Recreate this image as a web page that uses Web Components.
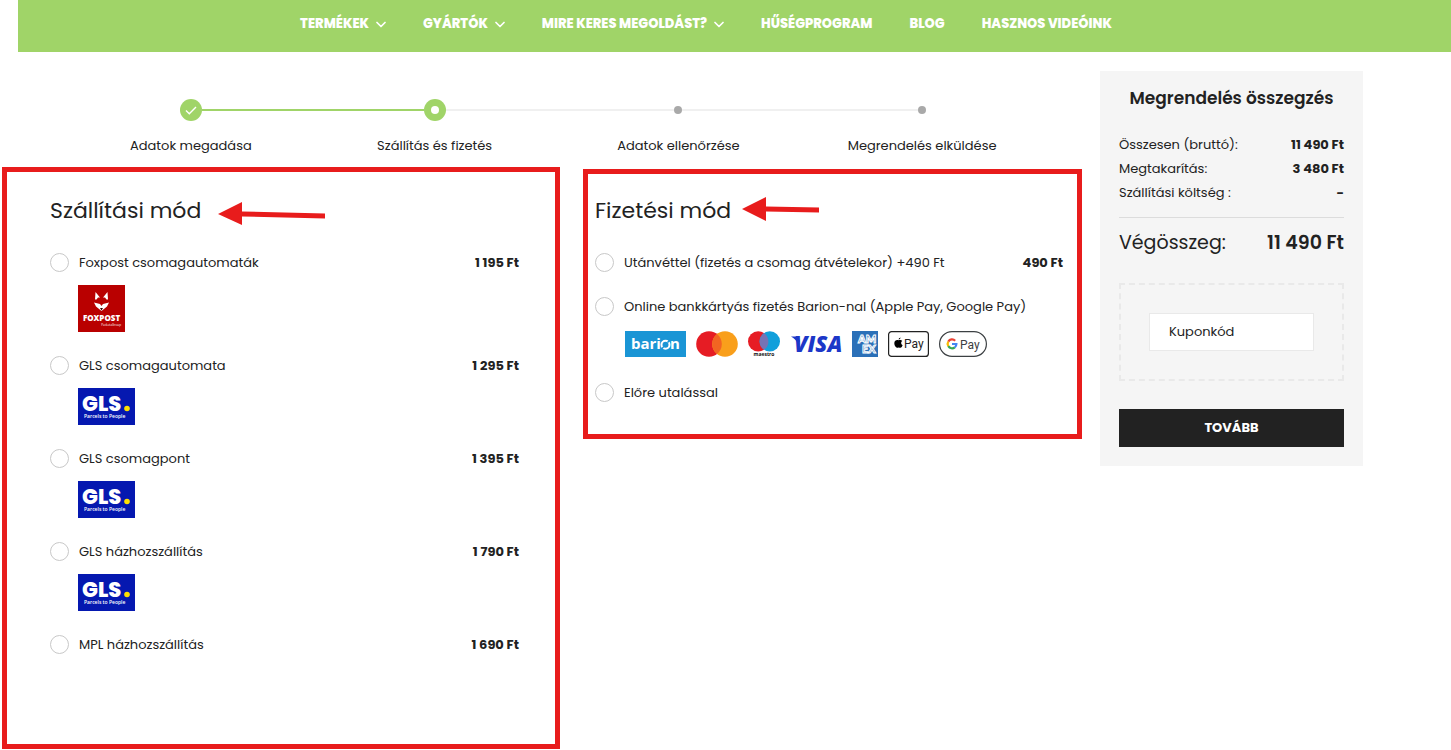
<!DOCTYPE html>
<html lang="hu">
<head>
<meta charset="utf-8">
<meta name="viewport" content="width=device-width, initial-scale=1">
<title>Szállítás és fizetés</title>
<style>
    body {
        margin: 0;
        background: #fff;
        color: #222;
        font: 13px/20px Poppins, Inter, "Open Sans", sans-serif;
        --green: #a0d468;
        --red: #e81c1c;
    }
</style>
</head>
<body>
<checkout-page></checkout-page>

<template id="site-nav">
<style>
    :host { display: block; margin-left: 18px; background: var(--green); }
    nav {
        display: flex;
        justify-content: center;
        gap: 37px;
        padding: 14px 57px 18px 0;
    }
</style>
<nav><slot></slot></nav>
</template>

<template id="nav-item">
<style>
    :host { display: block; }
    a {
        display: flex;
        align-items: center;
        gap: 7px;
        color: #fff;
        font-weight: 800;
        text-decoration: none;
        white-space: nowrap;
    }
    svg { display: none; }
    :host([menu]) svg { display: block; }
</style>
<a href="#"><slot></slot>
    <svg width="10" height="7" viewBox="0 0 10 7" fill="none" stroke="#fff" stroke-width="1.700" stroke-linecap="round" stroke-linejoin="round"><path d="M1 1.500 5 5.500 9 1.500"/></svg>
</a>
</template>

<template id="checkout-step">
<style>
    :host { display: block; flex: 1; text-align: center; }
    .marker { display: grid; grid-template-columns: 1fr auto 1fr; align-items: center; height: 22px; margin-bottom: 15px; }
    .line { height: 2px; background: #f0f0f0; }
    :host([first]) .before, :host([last]) .after { background: none; }
    :host([state="done"]) .after, :host([state="active"]) .before { background: var(--green); }
    .dot { width: 8px; height: 8px; border-radius: 50%; background: #a9a9a9; }
    :host([state]) .dot { display: grid; place-items: center; width: 22px; height: 22px; background: var(--green); }
    :host([state="active"]) .dot::after { content: ""; width: 8px; height: 8px; border-radius: 50%; background: #fff; }
    svg { display: none; }
    :host([state="done"]) svg { display: block; }
</style>
<div class="marker">
    <span class="line before"></span>
    <span class="dot"><svg width="12" height="9" viewBox="0 0 12 9" fill="none" stroke="#fff" stroke-width="1.4"><path d="M1 4.5 4.3 7.7 11 1"/></svg></span>
    <span class="line after"></span>
</div>
<slot></slot>
</template>

<template id="method-panel">
<style>
    :host { display: block; border: 5px solid var(--red); }
    header { display: flex; align-items: center; gap: var(--arrow-gap); height: 28px; margin-bottom: 27px; }
    h2 { margin: 0; font-size: 22px; line-height: 28px; font-weight: 400; white-space: nowrap; }
    .options { display: flex; flex-direction: column; gap: var(--row-gap); }
</style>
<header><h2></h2><slot name="arrow"></slot></header>
<div class="options" role="radiogroup"><slot></slot></div>
</template>

<template id="method-option">
<style>
    :host { display: block; }
    .row { display: flex; align-items: flex-start; gap: 10px; line-height: 22px; }
    input {
        appearance: none;
        flex: none;
        width: 19px;
        height: 19px;
        margin: 1px 0 0;
        border: 1px solid #c8c8c8;
        border-radius: 50%;
        background: #fff;
    }
    input:checked { border: 6px solid var(--green); }
    label { flex: 1; }
    b { font-weight: 700; }
    .logo { display: flex; align-items: flex-start; gap: 10px; min-height: 29px; margin: var(--logo-gap) 0 0 var(--logo-indent); }
    .logo[hidden] { display: none; }
</style>
<div class="row"><input type="radio" id="choice"><label for="choice"></label><b></b></div>
<div class="logo"><slot></slot></div>
</template>

<template id="order-summary">
<style>
    :host { display: block; padding: 15px 19px 19px; background: #f5f5f5; }
    h2 { margin: 0 0 23px; font-size: 17px; line-height: 24px; font-weight: 600; text-align: center; white-space: nowrap; }
    dl { margin: 0; }
    dl div { display: flex; justify-content: space-between; line-height: 24px; }
    dd { margin: 0; font-weight: 700; }
    dl .total { margin: 12px 0 26px; padding-top: 11px; border-top: 1px solid #dcdcdc; font-size: 19px; line-height: 28px; }
    .total dd { font-weight: 600; }
    .coupon { padding: 28px; border: 2px dashed #e9e9e9; }
    input {
        display: block;
        box-sizing: border-box;
        width: 100%;
        height: 38px;
        padding: 0 19px;
        border: 1px solid #e9e9e9;
        background: #fff;
        color: inherit;
        font: inherit;
    }
    input::placeholder { color: #222; opacity: 1; }
    button { display: block; width: 100%; height: 38px; margin-top: 28px; padding: 0; border: 0; background: #222; color: #fff; font: inherit; font-weight: 700; }
</style>
<h2>Megrendelés összegzés</h2>
<dl>
    <div><dt>Összesen (bruttó):</dt><dd>11 490 Ft</dd></div>
    <div><dt>Megtakarítás:</dt><dd>3 480 Ft</dd></div>
    <div><dt>Szállítási költség :</dt><dd>-</dd></div>
    <div class="total"><dt>Végösszeg:</dt><dd>11 490 Ft</dd></div>
</dl>
<div class="coupon"><input type="text" placeholder="Kuponkód" aria-label="Kuponkód"></div>
<button type="button">TOVÁBB</button>
</template>

<template id="checkout-page">
<style>
    :host { display: block; }
    main { display: grid; grid-template-columns: minmax(0, 1fr) 263px; gap: 18px; align-items: start; padding: 19px 88px 0 2px; }
    .steps { display: flex; padding: 28px 38px 11px 67px; }
    .panels { display: grid; grid-template-columns: 558fr 499fr; gap: 23px; align-items: start; }
    .shipping { --arrow-gap: 17px; --row-gap: 23px; --logo-gap: 11px; --logo-indent: 28px; padding: 25px 36px 88px 43px; }
    .payment { --arrow-gap: 11px; --row-gap: 22px; --logo-gap: 13px; --logo-indent: 30px; margin-top: 2px; padding: 23px 14px 30px 7px; }
</style>
<site-nav>
    <nav-item menu>TERMÉKEK</nav-item>
    <nav-item menu>GYÁRTÓK</nav-item>
    <nav-item menu>MIRE KERES MEGOLDÁST?</nav-item>
    <nav-item>HŰSÉGPROGRAM</nav-item>
    <nav-item>BLOG</nav-item>
    <nav-item>HASZNOS VIDEÓINK</nav-item>
</site-nav>
<main>
    <section>
        <div class="steps">
            <checkout-step first state="done">Adatok megadása</checkout-step>
            <checkout-step state="active">Szállítás és fizetés</checkout-step>
            <checkout-step>Adatok ellenőrzése</checkout-step>
            <checkout-step last>Megrendelés elküldése</checkout-step>
        </div>
        <div class="panels">
            <method-panel class="shipping" heading="Szállítási mód">
                <svg slot="arrow" width="108" height="28" viewBox="0 0 108 28" fill="#e81c1c"><path d="M0 17 24 5V14.500L107 16.500V21.500L24 19.500V28Z"/></svg>
                <method-option label="Foxpost csomagautomaták" price="1 195 Ft"><brand-logo name="foxpost"></brand-logo></method-option>
                <method-option label="GLS csomagautomata" price="1 295 Ft"><brand-logo name="gls"></brand-logo></method-option>
                <method-option label="GLS csomagpont" price="1 395 Ft"><brand-logo name="gls"></brand-logo></method-option>
                <method-option label="GLS házhozszállítás" price="1 790 Ft"><brand-logo name="gls"></brand-logo></method-option>
                <method-option label="MPL házhozszállítás" price="1 690 Ft"></method-option>
            </method-panel>
            <method-panel class="payment" heading="Fizetési mód">
                <svg slot="arrow" width="78" height="28" viewBox="0 0 78 28" fill="#e81c1c"><path d="M0 12 24 0V9.500L77 10.500V15.500L24 14.500V24Z"/></svg>
                <method-option label="Utánvéttel (fizetés a csomag átvételekor) +490 Ft" price="490 Ft"></method-option>
                <method-option label="Online bankkártyás fizetés Barion-nal (Apple Pay, Google Pay)">
                    <brand-logo name="barion"></brand-logo>
                    <brand-logo name="mastercard"></brand-logo>
                    <brand-logo name="maestro"></brand-logo>
                    <brand-logo name="visa"></brand-logo>
                    <brand-logo name="amex"></brand-logo>
                    <brand-logo name="applepay"></brand-logo>
                    <brand-logo name="googlepay"></brand-logo>
                </method-option>
                <method-option label="Előre utalással"></method-option>
            </method-panel>
        </div>
    </section>
    <order-summary></order-summary>
</main>
</template>

<script>
const LOGOS = {
    foxpost: `<svg width="47" height="47" viewBox="0 0 47 47"><rect width="47" height="47" fill="#b90000"/>
        <path fill="#fff" d="M17.500 7 22 12.500 20 12.500 18.500 14.500H17ZM29.500 7 25 12.500 27 12.500 28.500 14.500H30ZM16 17.500 22 19 23.500 21 25 19 31 17.500 29 21.500 23.500 26 18 21.500Z"/>
        <path fill="#300" d="M22 23H25L23.500 25.500Z"/>
        <text x="23.500" y="35.500" text-anchor="middle" fill="#fff" font-family="Open Sans" font-weight="800" font-size="8">FOXPOST</text>
        <text x="43" y="41" text-anchor="end" fill="#fff" font-family="Open Sans" font-size="3">PacketaGroup</text></svg>`,
    gls: `<svg width="57" height="37" viewBox="0 0 57 37"><rect width="57" height="37" fill="#0518b0"/>
        <text x="4" y="23" fill="#fff" font-family="Poppins" font-weight="800" font-size="21">GLS</text>
        <circle cx="49" cy="20.500" r="2.800" fill="#ffe000"/>
        <text x="6" y="29.500" fill="#fff" font-family="Open Sans" font-weight="600" font-size="5">Parcels to People</text></svg>`,
    barion: `<svg width="61" height="26" viewBox="0 0 61 26"><rect width="61" height="26" fill="#1a95d5"/>
        <text x="6" y="18" fill="#fff" font-family="Open Sans" font-weight="700" font-size="15">bari</text>
        <circle cx="40.500" cy="13.800" r="4" fill="none" stroke="#fff" stroke-width="2"/><path d="M36 18.500 38.500 16M42.500 11.500 45 9" stroke="#1a95d5" stroke-width="1.500"/>
        <text x="45" y="18" fill="#fff" font-family="Open Sans" font-weight="700" font-size="15">n</text></svg>`,
    mastercard: `<svg width="42" height="26" viewBox="0 0 42 26"><circle cx="13" cy="13" r="12.800" fill="#e61c24"/><circle cx="29" cy="13" r="12.800" fill="#f99f1b"/><path d="M21 3A12.800 12.800 0 0 1 21 23 12.800 12.800 0 0 1 21 3Z" fill="#f26522"/></svg>`,
    maestro: `<svg width="32" height="26" viewBox="0 0 32 26"><circle cx="10.200" cy="10.400" r="10.200" fill="#e61c24"/><circle cx="21.800" cy="10.400" r="10.200" fill="#119fdb"/><path d="M16 2A10.200 10.200 0 0 1 16 18.800 10.200 10.200 0 0 1 16 2Z" fill="#7673b5"/>
        <text x="16" y="25" text-anchor="middle" fill="#111" font-family="Open Sans" font-weight="700" font-size="5">maestro</text></svg>`,
    visa: `<svg width="52" height="26" viewBox="0 0 52 26"><path d="M1 5.500H7L10 10 8 13Q6 8 1 5.500Z" fill="#1c37c8"/><text x="4" y="21" fill="#1c37c8" font-family="Open Sans" font-weight="800" font-style="italic" font-size="22">VISA</text></svg>`,
    amex: `<svg width="26" height="26" viewBox="0 0 26 26"><rect width="26" height="26" fill="#2b70b8"/><g fill="#2b70b8" stroke="#fff" stroke-width="1" font-family="Lato" font-weight="900" font-size="11"><text x="6" y="12">AM</text><text x="10" y="21.500">EX</text></g></svg>`,
    applepay: `<svg width="41" height="26" viewBox="0 0 41 26"><rect x=".6" y=".6" width="39.800" height="24.800" rx="3" fill="#fff" stroke="#222" stroke-width="1.200"/>
        <path d="M10.600 9.300C9.400 8.700 6.300 8.800 6.300 12.300 6.300 14.500 7.800 16.800 9 16.800 9.700 16.800 10 16.400 10.700 16.400 11.400 16.400 11.700 16.800 12.400 16.800 13.400 16.800 14.300 15.300 14.600 14.300 12.700 13.400 12.700 10.900 14.300 10.100 13.300 8.700 11.500 8.900 10.600 9.300ZM10.500 8.600Q10.600 6.700 12.600 6.400 12.500 8.300 10.500 8.600Z"/>
        <text x="16" y="17" fill="#222" font-family="Roboto" font-size="12">Pay</text></svg>`,
    googlepay: `<svg width="48" height="26" viewBox="0 0 48 26"><rect x=".6" y=".6" width="46.800" height="24.800" rx="12.400" fill="#fff" stroke="#3c4043" stroke-width="1.200"/>
        <g fill="none" stroke-width="2.200"><path d="M16.200 9.700A4.400 4.400 0 0 0 9.300 10.600" stroke="#ea4335"/><path d="M9.300 10.600A4.400 4.400 0 0 0 9.300 15.200" stroke="#fbbc04"/><path d="M9.300 15.200A4.400 4.400 0 0 0 15.800 16.300" stroke="#34a853"/><path d="M15.800 16.300A4.400 4.400 0 0 0 17.400 13H13" stroke="#4285f4"/></g>
        <text x="21" y="17.500" fill="#3c4043" font-family="Roboto" font-size="12">Pay</text></svg>`
};

class TemplateElement extends HTMLElement {
    constructor() {
        super();
        this.attachShadow({ mode: 'open' });
        const template = document.getElementById(this.localName);
        this.shadowRoot.appendChild(template.content.cloneNode(true));
    }
}

class SiteNav extends TemplateElement {}
class NavItem extends TemplateElement {}
class CheckoutStep extends TemplateElement {}
class OrderSummary extends TemplateElement {}
class CheckoutPage extends TemplateElement {}

class MethodPanel extends TemplateElement {
    connectedCallback() {
        const heading = this.getAttribute('heading');
        this.shadowRoot.querySelector('h2').textContent = heading;
        this.shadowRoot.querySelector('.options').setAttribute('aria-label', heading);
        // radios live in separate shadow roots, so the panel keeps them exclusive
        this.addEventListener('option-select', (e) => {
            this.querySelectorAll('method-option').forEach((option) => {
                option.checked = option === e.target;
            });
        });
    }
}

class MethodOption extends TemplateElement {
    connectedCallback() {
        const root = this.shadowRoot;
        root.querySelector('label').textContent = this.getAttribute('label');
        root.querySelector('b').textContent = this.getAttribute('price') || '';
        root.querySelector('.logo').hidden = !this.children.length;
        root.querySelector('input').addEventListener('change', () => {
            this.dispatchEvent(new CustomEvent('option-select', { bubbles: true }));
        });
    }

    set checked(value) {
        this.shadowRoot.querySelector('input').checked = value;
    }
}

class BrandLogo extends HTMLElement {
    constructor() {
        super();
        this.attachShadow({ mode: 'open' });
    }

    connectedCallback() {
        this.shadowRoot.innerHTML = `<style>:host { display: block; } svg { display: block; }</style>${LOGOS[this.getAttribute('name')]}`;
    }
}

customElements.define('brand-logo', BrandLogo);
customElements.define('site-nav', SiteNav);
customElements.define('nav-item', NavItem);
customElements.define('checkout-step', CheckoutStep);
customElements.define('method-option', MethodOption);
customElements.define('method-panel', MethodPanel);
customElements.define('order-summary', OrderSummary);
customElements.define('checkout-page', CheckoutPage);
</script>
</body>
</html>
